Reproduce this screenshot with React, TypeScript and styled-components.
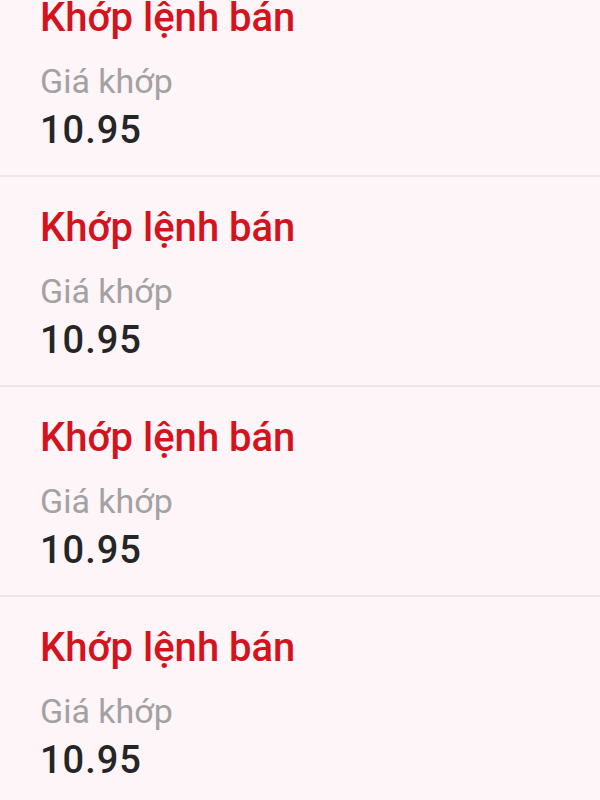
import React from "react";
import styled, { createGlobalStyle } from "styled-components";

const Global = createGlobalStyle`
  html, body {
    margin: 0;
    padding: 0;
    background: #fdf5f8;
    overflow: hidden;
  }
  body {
    font-family: Roboto, "Noto Sans", "Liberation Sans", sans-serif;
  }
`;

const List = styled.div`
  display: flex;
  flex-direction: column;
  margin-top: -33px;
  background: #fdf5f8;
`;

const Row = styled.div`
  display: flex;
  flex-direction: column;
  padding: 27px 40px 22px;
  border-bottom: 2px solid #ece6e9;
`;

const Title = styled.div`
  font-size: 40px;
  line-height: 48px;
  font-weight: 500;
  color: #d3141e;
`;

const Label = styled.div`
  margin-top: 17px;
  font-size: 34px;
  line-height: 44px;
  font-weight: 400;
  color: #a3a1a2;
`;

const Value = styled.div`
  margin-top: 4px;
  font-size: 38px;
  line-height: 46px;
  font-weight: 500;
  letter-spacing: 1px;
  color: #262526;
`;

const items = [0, 1, 2, 3];

export default function App() {
  return (
    <>
      <Global />
      <List>
        {items.map((i) => (
          <Row key={i}>
            <Title>Khớp lệnh bán</Title>
            <Label>Giá khớp</Label>
            <Value>10.95</Value>
          </Row>
        ))}
      </List>
    </>
  );
}
